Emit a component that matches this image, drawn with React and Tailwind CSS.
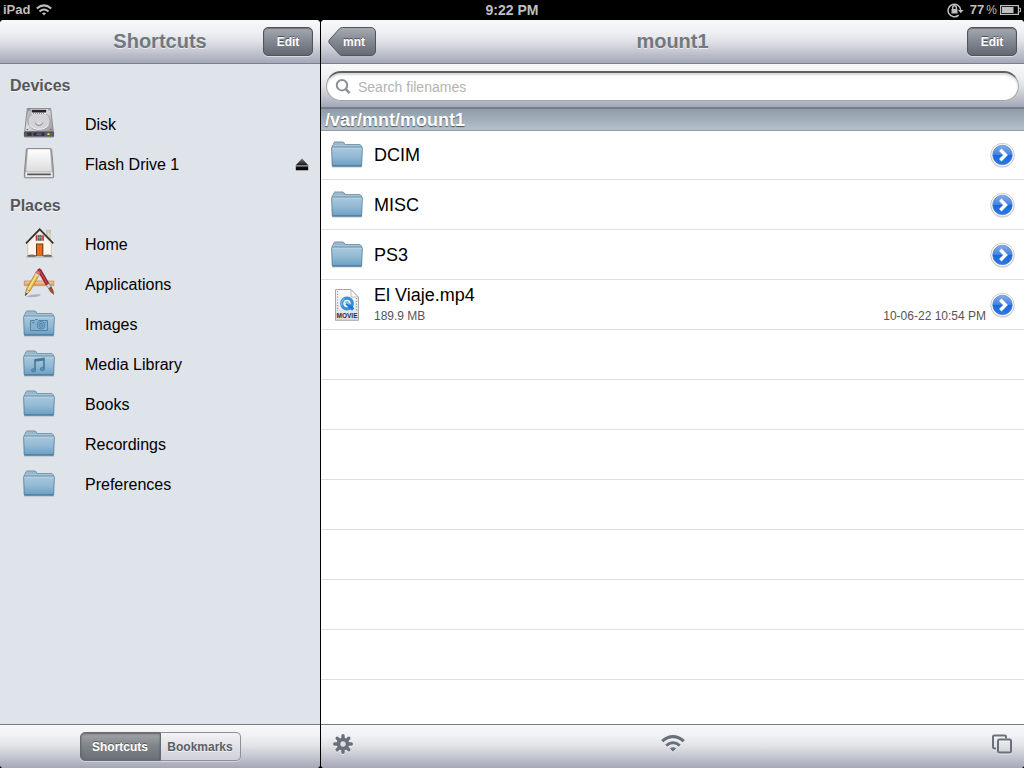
import React from 'react';

const shadowLight = '[text-shadow:0_1px_0_rgba(255,255,255,0.6)]';
const darkButton =
  'h-[29px] rounded-[5px] border border-[#4f555e] bg-linear-to-b from-[#a6a9b0] via-[#828790] to-[#636973] text-xs font-bold text-white shadow-[0_1px_0_rgba(255,255,255,0.5),inset_0_1px_1px_rgba(0,0,0,0.3)] [text-shadow:0_-1px_0_rgba(0,0,0,0.45)]';
const barGradient =
  'bg-[linear-gradient(to_bottom,#f7f8f9_0%,#eef0f3_28%,#e0e1e6_50%,#c6c8d2_72%,#a4a7b6_100%)]';

function Gradients() {
  return (
    <svg width="0" height="0" className="absolute" aria-hidden="true">
      <defs>
        <linearGradient id="folderFront" x1="0" y1="0" x2="0" y2="1">
          <stop offset="0" stopColor="#a9c9de" />
          <stop offset="0.5" stopColor="#93b9d3" />
          <stop offset="1" stopColor="#6b9fc4" />
        </linearGradient>
        <linearGradient id="folderBack" x1="0" y1="0" x2="0" y2="1">
          <stop offset="0" stopColor="#9dbcd1" />
          <stop offset="1" stopColor="#6791ae" />
        </linearGradient>
        <linearGradient id="metal" x1="0" y1="0" x2="1" y2="1">
          <stop offset="0" stopColor="#a2a2a6" />
          <stop offset="0.45" stopColor="#dcdcdf" />
          <stop offset="1" stopColor="#94949a" />
        </linearGradient>
        <linearGradient id="paper" x1="0" y1="0" x2="0" y2="1">
          <stop offset="0" stopColor="#ffffff" />
          <stop offset="1" stopColor="#dcdcde" />
        </linearGradient>
        <linearGradient id="blueDisc" x1="0" y1="0" x2="0" y2="1">
          <stop offset="0" stopColor="#86aeea" />
          <stop offset="0.48" stopColor="#4583df" />
          <stop offset="0.5" stopColor="#1c67d8" />
          <stop offset="1" stopColor="#2b7be8" />
        </linearGradient>
        <linearGradient id="backFill" x1="0" y1="0" x2="0" y2="1">
          <stop offset="0" stopColor="#a9abb2" />
          <stop offset="0.5" stopColor="#828790" />
          <stop offset="1" stopColor="#646a74" />
        </linearGradient>
        <linearGradient id="ejectFill" x1="0" y1="0" x2="0" y2="1">
          <stop offset="0" stopColor="#777777" />
          <stop offset="0.5" stopColor="#222222" />
          <stop offset="1" stopColor="#000000" />
        </linearGradient>
      </defs>
    </svg>
  );
}

function FolderIcon({ children }) {
  return (
    <svg width="32" height="32" viewBox="0 0 32 32" aria-hidden="true" className="shrink-0">
      <path d="M1 28h30" stroke="#50606d" strokeOpacity="0.35" />
      <path d="M1.3 26V6.4L2.7 5.2V3.9L3.6 3h8.6l1 1 .7 1.6h15.2l1.3 1.3V26z" fill="url(#folderBack)" stroke="#7393a8" />
      <path d="M2.5 6.6h26.8" stroke="#aac7d9" />
      <path d="M.6 9.1q0-.9.9-.9h29q.9 0 .9.9L30.6 27H1.4z" fill="url(#folderFront)" stroke="#6389a3" strokeWidth="0.9" />
      <path d="M1.5 9.1h29" stroke="#c5dcea" strokeOpacity="0.7" />
      <path d="M1.3 27h29.4" stroke="#3d6f95" />
      {children}
    </svg>
  );
}

function CameraFolderIcon() {
  return (
    <FolderIcon>
      <g fill="none" stroke="#4d84aa" strokeWidth="1">
        <path d="M7.5 12.5h4l1-1h2l1 1h9v10h-17z" fill="#86b0cd" />
        <circle cx="18" cy="17.3" r="3.8" />
        <circle cx="18" cy="17.3" r="2" fill="#709fbf" />
        <path d="M9 14.7h2.5M22.3 14.5h1" />
      </g>
    </FolderIcon>
  );
}

function MusicFolderIcon() {
  return (
    <FolderIcon>
      <path d="M12 11.7l9-1.2v10.3" fill="none" stroke="#43789e" strokeWidth="1.6" />
      <path d="M12 12.7l9-1.2" stroke="#43789e" strokeWidth="2" />
      <path d="M12 11.5v11" stroke="#43789e" strokeWidth="1.6" />
      <ellipse cx="10.6" cy="22.3" rx="2.2" ry="1.6" fill="#5b8fb4" stroke="#43789e" strokeWidth="0.8" />
      <ellipse cx="19.4" cy="21" rx="2.2" ry="1.6" fill="#5b8fb4" stroke="#43789e" strokeWidth="0.8" />
    </FolderIcon>
  );
}

function DiskIcon() {
  return (
    <svg width="32" height="32" viewBox="0 1 32 32" aria-hidden="true">
      <path d="M4.3 1.5h23.4l2.6 23.2H1.7z" fill="url(#metal)" stroke="#85858a" strokeWidth="0.9" />
      <path d="M6 2v1.5M26 2v1.5M3.6 22.5h1.5M27 22.5h1.5" stroke="#66666b" />
      <path d="M9.2 6.5C5.7 9 4.6 12 5 15.3c.5 4.5 5.3 7.7 11 7.7s10.500-3.200 11-7.700c.4-3.300-.7-6.300-4.200-8.800" fill="#d3d3d7" stroke="#8d8d93" strokeWidth="0.8" />
      <path d="M6.500 17.500C8 21 12 22.300 16 22.300s8-1.300 9.500-4.800" fill="none" stroke="#f6f6f8" strokeWidth="0.9" />
      <path d="M8.500 2h15v5h-15z" fill="#ededed" />
      <path d="M8.800 2.800h14.400v2.600H8.800z" fill="#26262a" />
      <path d="M10 6.200h12" stroke="#55555a" strokeDasharray="1 1" />
      <path d="M12.300 15q3.700 1 7.400 0-.2 3.300-3.700 3.300T12.300 15" fill="#e2e2e6" />
      <path d="M12.200 15.500q.8 2.900 3.800 2.900t3.800-2.900" fill="none" stroke="#77777d" strokeWidth="0.9" />
      <path d="M1.400 25h29.200v4.600H1.400z" fill="#5a5a62" stroke="#45454c" strokeWidth="0.8" />
      <path d="M4.500 25.800h4v3h-4zM10.500 25.800h11v3h-11z" fill="#2c2c3a" />
      <path d="M13.500 26.300h5v2h-5z" fill="#5e5d8c" />
      <path d="M24.500 26.300h2v1.700h-2z" fill="#ffdf34" />
      <path d="M1.800 30.200h28.400" stroke="#a7a7ac" />
    </svg>
  );
}

function FlashIcon() {
  return (
    <svg width="32" height="32" viewBox="0 1 32 32" aria-hidden="true">
      <path d="M4.500 1.600h23q1 0 1.100 1l2 22.500v4.800q0 .9-1 .9H2.400q-1 0-1-.9v-4.800l2-22.500q.1-1 1.100-1z" fill="#a9a9ac" stroke="#88888b" />
      <path d="M5 2.200h22l1.800 22.400H3.200z" fill="url(#paper)" />
      <path d="M2.500 25.200h27v4.900h-27z" fill="#ececed" />
      <path d="M4.200 26.600h23.600v1.700H4.200z" fill="#555558" />
    </svg>
  );
}

function HomeIcon() {
  return (
    <svg width="32" height="32" viewBox="0 0 32 32" aria-hidden="true">
      <path d="M3 29h27" stroke="#514e43" strokeOpacity="0.4" />
      <path d="M24 3.500h3V12h-3z" fill="#e5dfce" stroke="#b3aa95" strokeWidth="0.7" />
      <path d="M23.500 2.300h4v1.800h-4z" fill="#e3dac6" stroke="#a99f8b" strokeWidth="0.5" />
      <path d="M4.700 13.500L16.700 1.800 28.300 13.500V28H4.700z" fill="#f8f6ec" stroke="#b5af9b" strokeWidth="0.6" />
      <path d="M3 15.300L16.700 1.300l13.600 14" fill="none" stroke="#37312b" strokeWidth="1.700" />
      <path d="M4.700 15.700L16.700 3.400l11.700 12.300" fill="none" stroke="#d8cfb8" strokeWidth="0.7" />
      <path d="M12.700 7.200h8.200v5.600h-8.200z" fill="#b1342e" />
      <path d="M14.700 6.800h4.200v6.200h-4.200z" fill="#41454e" stroke="#ece6d6" strokeWidth="0.6" />
      <path d="M16.800 7v6M14.700 9.800h4.200" stroke="#ddd" strokeWidth="0.5" />
      <path d="M13 15.500h7.300V28H13z" fill="#5f3017" />
      <path d="M13.900 16.300h5.500V28h-5.500z" fill="#dc6519" />
      <path d="M15.200 17.300v9.500M17.900 17.300v9.500" stroke="#ee8134" strokeWidth="0.7" />
      <path d="M4.700 27.800h8M20.500 27.800h8" stroke="#3b3a2e" strokeWidth="1.300" />
      <path d="M6.500 26.900h4.500M22.500 26.900h4" stroke="#8b8e68" strokeWidth="0.8" />
    </svg>
  );
}

function ApplicationsIcon() {
  return (
    <svg width="32" height="32" viewBox="0 0 32 32" aria-hidden="true">
      <path d="M3 28.500q7-3 15-2l-2 1.700Q8 30 3 28.500z" fill="#666" fillOpacity="0.4" />
      <path d="M1.300 13h29.500v4.700H1.300z" fill="#e9b07c" stroke="#ba7c4d" strokeWidth="0.6" />
      <path d="M2 14.200h28" stroke="#f5d0a4" strokeWidth="0.8" />
      <path d="M2 16.500h28" stroke="#d1905c" strokeWidth="0.600" />
      <path d="M14.700 2.500Q14.900.8 16.500.8q1 0 1.600 1.100l8 13.900-2.700 1.700z" fill="#a61e28" stroke="#74141d" strokeWidth="0.7" />
      <path d="M16.400 2.200l7.800 13.500" stroke="#da6270" strokeWidth="0.8" />
      <path d="M23.200 17.300l2.900-1.800 2.200 3.700-2.600 1.500z" fill="#cdd0d2" stroke="#77797c" strokeWidth="0.6" />
      <path d="M25.700 20.500l2.600-1.500q2.300 3 2.500 7.300-3.700-1.700-5.100-5.800z" fill="#a34e33" stroke="#754126" strokeWidth="0.6" />
      <path d="M12.800 4.800l3.600 2L7 22.900 2.300 27.500 3.500 20.900z" fill="#f0bd45" stroke="#9e7428" strokeWidth="0.7" />
      <path d="M14.300 5.700L5.200 21.600" stroke="#fce69a" strokeWidth="1.200" />
      <path d="M3.500 21.300L6.800 23.200l-4.500 4.300z" fill="#f0d0a0" stroke="#93714a" strokeWidth="0.5" />
      <path d="M2.900 24.900l1.600.9-2.400 2z" fill="#272525" />
      <path d="M12.400 5.200l1.100-2q.6-.8 1.500-.4l1.700 1q.7.500.4 1.300l-1.100 2z" fill="#e0777a" stroke="#8e4142" strokeWidth="0.5" />
      <path d="M11.700 6.500l.8-1.500 3.600 2-.8 1.500z" fill="#d7d7d6" />
    </svg>
  );
}

function MovieIcon() {
  return (
    <svg width="32" height="32" viewBox="0 0 32 32" aria-hidden="true" className="shrink-0">
      <path d="M4.500.5H20l7.500 7.500v23.300h-23z" fill="url(#paper)" stroke="#a8a8a8" />
      <path d="M6.500 2v20M25.500 9v13" stroke="#999" strokeWidth="1.300" strokeDasharray="1.200 1.600" />
      <path d="M20 .7V8h7.300z" fill="#f7f7f7" stroke="#b3b3b3" strokeWidth="0.8" />
      <circle cx="16" cy="14.500" r="5.300" fill="#e7f5fd" stroke="#2f93e2" strokeWidth="3.200" />
      <path d="M11 16.500a5.500 5.500 0 0 1 2.500-7" fill="none" stroke="#79c4f5" strokeWidth="1.200" />
      <path d="M15.500 14l6.700 6.500" stroke="#1b7bd0" strokeWidth="3.200" />
      <path d="M13.500 13.800q1.500-2.500 4-1.400l1.300 3.600z" fill="#7ebce5" />
      <text x="16" y="29.300" textAnchor="middle" fontFamily="Liberation Sans, sans-serif" fontSize="6.500" fontWeight="700" fill="#2b2b2b">MOVIE</text>
    </svg>
  );
}

function WifiIcon({ width, height }) {
  return (
    <svg width={width} height={height} viewBox="0 0 24 17" fill="none" stroke="currentColor" aria-hidden="true">
      <path d="M1.200 6.300Q12-2.900 22.800 6.300" strokeWidth="3.200" />
      <path d="M5.200 10.600q6.800-5.600 13.600 0" strokeWidth="3" />
      <path d="M8.900 13.400Q12 11 15.100 13.400L12 16.700z" fill="currentColor" stroke="none" />
    </svg>
  );
}

function GearIcon() {
  return (
    <svg width="20" height="20" viewBox="0 0 20 20" aria-hidden="true" className="drop-shadow-[0_1px_0_rgba(255,255,255,0.6)]">
      <g stroke="#697079" strokeWidth="3.400" strokeLinecap="round">
        <path d="M10 1.700v16.600M1.700 10h16.600" />
        <path d="M4.200 4.200l11.600 11.600M15.800 4.200L4.200 15.800" />
      </g>
      <circle cx="10" cy="10" r="6.300" fill="#697079" />
      <circle cx="10" cy="10" r="2.700" fill="#dfe0e5" />
    </svg>
  );
}

function PagesIcon() {
  return (
    <svg width="22" height="20" viewBox="0 0 22 20" fill="none" stroke="#697079" strokeWidth="2" aria-hidden="true" className="drop-shadow-[0_1px_0_rgba(255,255,255,0.6)]">
      <path d="M5 14.500H3.300Q2 14.500 2 13.200V2.800Q2 1.500 3.300 1.500h10.400Q15 1.500 15 2.800v1.700" />
      <rect x="7" y="5.500" width="13" height="13" rx="1.500" />
    </svg>
  );
}

function DetailIcon() {
  return (
    <svg width="26" height="28" viewBox="0 0 26 28" aria-hidden="true">
      <circle cx="13.500" cy="14.800" r="12" fill="#000" fillOpacity="0.15" />
      <circle cx="13.500" cy="14" r="11.700" fill="#fff" stroke="#c2c2c2" strokeWidth="0.8" />
      <circle cx="13.500" cy="14" r="9.800" fill="url(#blueDisc)" stroke="#3772c6" strokeWidth="0.6" />
      <path d="M11.300 8.800L16.500 14l-5.200 5.200" fill="none" stroke="#fff" strokeWidth="3.400" />
    </svg>
  );
}

function EjectIcon() {
  return (
    <svg width="14" height="13" viewBox="0 0 14 13" aria-hidden="true">
      <path d="M7 .5l6.500 7H.5zM.8 8.300h12.400v4H.8z" fill="url(#ejectFill)" />
      <path d="M.6 7.900h12.800" stroke="#8f9196" strokeWidth="0.8" />
    </svg>
  );
}

const sections = [
  {
    title: 'Devices',
    items: [
      { label: 'Disk', Icon: DiskIcon },
      { label: 'Flash Drive 1', Icon: FlashIcon, ejectable: true },
    ],
  },
  {
    title: 'Places',
    items: [
      { label: 'Home', Icon: HomeIcon },
      { label: 'Applications', Icon: ApplicationsIcon },
      { label: 'Images', Icon: CameraFolderIcon },
      { label: 'Media Library', Icon: MusicFolderIcon },
      { label: 'Books', Icon: FolderIcon },
      { label: 'Recordings', Icon: FolderIcon },
      { label: 'Preferences', Icon: FolderIcon },
    ],
  },
];

const files = [
  { name: 'DCIM', Icon: FolderIcon },
  { name: 'MISC', Icon: FolderIcon },
  { name: 'PS3', Icon: FolderIcon },
  { name: 'El Viaje.mp4', Icon: MovieIcon, size: '189.9 MB', date: '10-06-22 10:54 PM' },
];

const emptyRows = [0, 1, 2, 3, 4, 5, 6];

function StatusBar() {
  return (
    <div className="grid h-5 shrink-0 grid-cols-[1fr_auto_1fr] items-center bg-black px-[3px] text-[13px] leading-5 font-bold text-[#bfbfbf]">
      <div className="flex items-center gap-1.5">
        <span>iPad</span>
        <WifiIcon width="16" height="12" />
      </div>
      <span className="text-sm leading-5">9:22 PM</span>
      <div className="flex items-center justify-end">
        <svg width="17" height="16" viewBox="0 0 17 16" fill="none" stroke="currentColor" strokeWidth="1.500" aria-hidden="true">
          <path d="M11.700 13.100A6.300 6.300 0 1 1 13.700 8" />
          <path d="M11 8h5.500l-2.700 3.200z" fill="currentColor" stroke="none" />
          <path d="M4.500 7h6v4.500h-6z" fill="currentColor" stroke="none" />
          <path d="M5.700 7V5.600a1.800 1.800 0 0 1 3.600 0V7" />
        </svg>
        <span className="ml-1.5">77</span>
        <span className="ml-0.5 text-xs leading-5 font-normal">%</span>
        <svg width="21" height="12" viewBox="0 0 21 12" className="ml-[3px]" aria-hidden="true">
          <rect x="0.600" y="1.600" width="17.800" height="8.800" fill="none" stroke="#bfbfbf" strokeWidth="1.200" />
          <rect x="2" y="3" width="11.500" height="6" fill="#bfbfbf" />
          <path d="M18.500 4.200h2v3.600h-2z" fill="none" stroke="#bfbfbf" />
        </svg>
      </div>
    </div>
  );
}

function Sidebar() {
  return (
    <aside className="flex w-80 shrink-0 flex-col overflow-hidden rounded-[4px] bg-[#dfe3ea]">
      <header className={`grid h-11 shrink-0 grid-cols-[1fr_auto_1fr] items-center border-b border-[#7a7f91] px-[7px] ${barGradient}`}>
        <span />
        <h1 className={`pb-0.5 text-xl leading-6 font-bold text-[#717880] ${shadowLight}`}>Shortcuts</h1>
        <button type="button" className={`w-[50px] justify-self-end ${darkButton}`}>Edit</button>
      </header>
      <nav className="min-h-0 flex-1 overflow-hidden">
        {sections.map((section) => (
          <section key={section.title}>
            <h2 className="flex h-10 items-center px-2.5 pt-1 text-base font-bold text-[#55575b] [text-shadow:0_1px_0_rgba(255,255,255,0.7)]">
              {section.title}
            </h2>
            <ul>
              {section.items.map(({ label, Icon, ejectable }) => (
                <li key={label} className="flex h-10 items-center pr-[11px] pl-[23px]">
                  <a href="#" className="flex flex-1 items-center gap-[30px] text-base text-black">
                    <Icon />
                    <span className="pt-0.5">{label}</span>
                  </a>
                  {ejectable && (
                    <button type="button" aria-label={`Eject ${label}`}>
                      <EjectIcon />
                    </button>
                  )}
                </li>
              ))}
            </ul>
          </section>
        ))}
      </nav>
      <footer className={`flex h-11 shrink-0 items-center justify-center border-t border-[#7c7c80] ${barGradient}`}>
        <div className="flex h-[29px] rounded-[5px] text-xs font-bold shadow-[0_1px_0_rgba(255,255,255,0.4)]">
          <button type="button" aria-pressed="true" className="w-[81px] rounded-l-[5px] border border-[#666c73] bg-linear-to-b from-[#a2a5a8] via-[#7f8489] to-[#696f76] text-white shadow-[inset_0_1px_2px_rgba(0,0,0,0.4)] [text-shadow:0_-1px_0_rgba(0,0,0,0.4)]">
            Shortcuts
          </button>
          <button type="button" aria-pressed="false" className={`w-20 rounded-r-[5px] border border-l-0 border-[#8c8f98] bg-linear-to-b from-[#f3f3f5] to-[#cfd0d8] text-[#596067] ${shadowLight}`}>
            Bookmarks
          </button>
        </div>
      </footer>
    </aside>
  );
}

function FileRow({ file }) {
  const { name, Icon, size, date } = file;
  return (
    <li className="flex h-[50px] items-center border-b border-[#dedede] pr-[9px] pl-2.5">
      <Icon />
      <div className={size ? 'ml-[11px] min-w-0 flex-1 pb-0.5' : 'ml-[11px] min-w-0 flex-1'}>
        <a href="#" className="block text-lg leading-6 text-black">{name}</a>
        {size && (
          <div className="flex justify-between text-xs leading-[18px] text-[#555]">
            <span>{size}</span>
            <span>{date}</span>
          </div>
        )}
      </div>
      <button type="button" aria-label={`Details for ${name}`} className="ml-[3px]">
        <DetailIcon />
      </button>
    </li>
  );
}

function Browser() {
  return (
    <main className="flex min-w-0 flex-1 flex-col overflow-hidden rounded-[4px] bg-white">
      <header className={`grid h-11 shrink-0 grid-cols-[1fr_auto_1fr] items-center border-b border-[#7a7f91] px-[7px] ${barGradient}`}>
        <button type="button" className="relative h-[29px] w-12 justify-self-start pl-1 text-xs font-bold text-white [text-shadow:0_-1px_0_rgba(0,0,0,0.45)]">
          <svg width="48" height="29" viewBox="0 0 48 29" className="absolute inset-0" aria-hidden="true">
            <path d="M14.500.5H43a4.500 4.500 0 0 1 4.500 4.500v19a4.500 4.500 0 0 1-4.500 4.500H14.500q-2 0-3.300-1.500L1.300 16q-1.200-1.500 0-3L11.200 2q1.300-1.500 3.300-1.500z" fill="url(#backFill)" stroke="#4f555e" />
          </svg>
          <span className="relative">mnt</span>
        </button>
        <h1 className={`pb-0.5 text-xl leading-6 font-bold text-[#717880] ${shadowLight}`}>mount1</h1>
        <button type="button" className={`w-[50px] justify-self-end ${darkButton}`}>Edit</button>
      </header>
      <div className={`h-[45px] shrink-0 border-b-2 border-[#747c8e] px-[5px] pt-[7px] ${barGradient}`}>
        <label className="flex h-[30px] items-center gap-[7px] rounded-full border border-t-2 border-[#a2a4a5] border-t-[#5e625f] bg-white px-2 shadow-[inset_0_2px_2px_rgba(0,0,0,0.15)]">
          <svg width="16" height="16" viewBox="0 0 16 16" fill="none" stroke="#8c929b" strokeWidth="2" aria-hidden="true">
            <circle cx="7" cy="6.200" r="5.200" />
            <path d="M10.800 10.200l3.800 4" strokeWidth="2.500" />
          </svg>
          <input type="search" aria-label="Search filenames" placeholder="Search filenames" className="min-w-0 flex-1 bg-transparent text-sm outline-none placeholder:text-[#b3b3b3]" />
        </label>
      </div>
      <div className="h-[22px] shrink-0 border-b border-[#8f9aa5] bg-linear-to-b from-[#8e9da9] to-[#b5c0ca] px-1 text-lg leading-[22px] font-bold text-white [text-shadow:0_1px_1px_rgba(0,0,0,0.55)]">
        /var/mnt/mount1
      </div>
      <ul className="-mt-px min-h-0 flex-1 overflow-hidden">
        {files.map((file) => (
          <FileRow key={file.name} file={file} />
        ))}
        {emptyRows.map((row) => (
          <li key={row} aria-hidden="true" className="h-[50px] border-b border-[#dedede]" />
        ))}
      </ul>
      <footer className={`grid h-11 shrink-0 grid-cols-[1fr_auto_1fr] items-center border-t border-[#7c7c80] pr-[11px] pb-1.5 pl-3 text-[#697079] ${barGradient}`}>
        <button type="button" aria-label="Settings" className="justify-self-start">
          <GearIcon />
        </button>
        <button type="button" aria-label="Wi-Fi sharing" className="drop-shadow-[0_1px_0_rgba(255,255,255,0.6)]">
          <WifiIcon width="24" height="17" />
        </button>
        <button type="button" aria-label="Windows" className="justify-self-end">
          <PagesIcon />
        </button>
      </footer>
    </main>
  );
}

export default function App() {
  return (
    <div className="flex h-screen flex-col overflow-hidden bg-black font-['Liberation_Sans',Arial,sans-serif]">
      <Gradients />
      <StatusBar />
      <div className="flex min-h-0 flex-1 gap-px">
        <Sidebar />
        <Browser />
      </div>
    </div>
  );
}
